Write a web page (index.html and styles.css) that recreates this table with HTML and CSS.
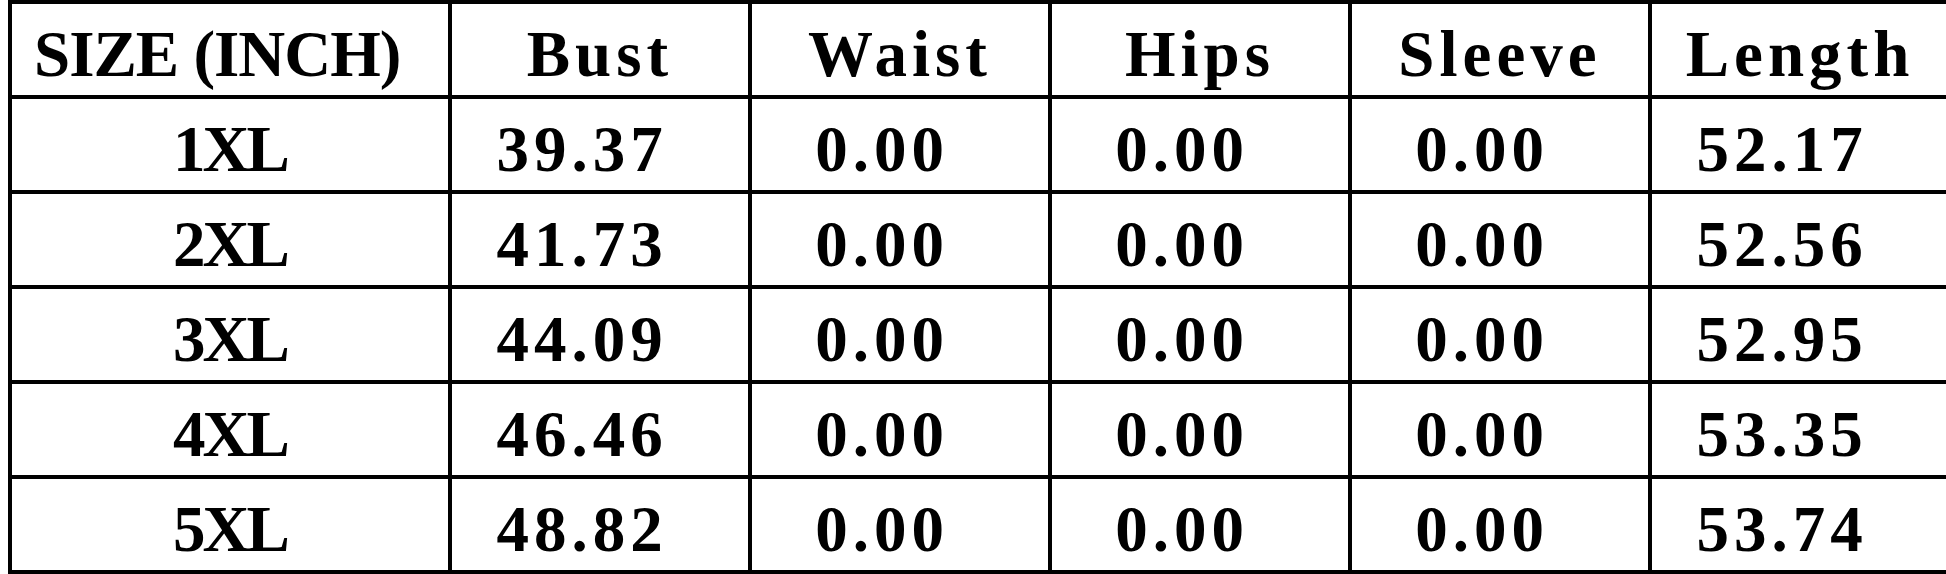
FILE: index.html
```html
<!DOCTYPE html>
<html>
<head>
<meta charset="utf-8">
<link rel="stylesheet" href="styles.css">
</head>
<body>
<table class="size-table">
  <colgroup>
    <col class="col-size">
    <col class="col-val"><col class="col-val"><col class="col-val"><col class="col-val"><col class="col-val">
  </colgroup>
  <thead>
    <tr class="head-row">
      <th class="size-head">SIZE (INCH)</th>
      <th>Bust</th>
      <th>Waist</th>
      <th>Hips</th>
      <th>Sleeve</th>
      <th>Length</th>
    </tr>
  </thead>
  <tbody>
    <tr><td class="size">1XL</td><td>39.37</td><td>0.00</td><td>0.00</td><td>0.00</td><td>52.17</td></tr>
    <tr><td class="size">2XL</td><td>41.73</td><td>0.00</td><td>0.00</td><td>0.00</td><td>52.56</td></tr>
    <tr><td class="size">3XL</td><td>44.09</td><td>0.00</td><td>0.00</td><td>0.00</td><td>52.95</td></tr>
    <tr><td class="size">4XL</td><td>46.46</td><td>0.00</td><td>0.00</td><td>0.00</td><td>53.35</td></tr>
    <tr><td class="size">5XL</td><td>48.82</td><td>0.00</td><td>0.00</td><td>0.00</td><td>53.74</td></tr>
  </tbody>
</table>
</body>
</html>
```
FILE: styles.css
```css
html, body {
  background: #ffffff;
}
body {
  margin: 0 0 0 8px;
  overflow: hidden;
}
.size-table {
  border-collapse: collapse;
  table-layout: fixed;
  width: 1940px;
  font-family: "Liberation Serif", "Times New Roman", serif;
  font-weight: bold;
  font-size: 65px;
  color: #000;
}
.col-size { width: 440px; }
.col-val { width: 300px; }
.size-table th,
.size-table td {
  border: 4px solid #000;
  height: 81px;
  padding: 10px 0 0 0;
  text-align: center;
  vertical-align: middle;
  line-height: 1;
  font-weight: bold;
  letter-spacing: 5px;
  white-space: nowrap;
}
.size-table td {
  height: 82px;
  padding-top: 9px;
  padding-right: 36px;
}
.size-table th.size-head {
  letter-spacing: -1px;
  text-align: left;
  padding-left: 22px;
}
.size-table td.size {
  padding-right: 0;
  letter-spacing: -3px;
}
```
